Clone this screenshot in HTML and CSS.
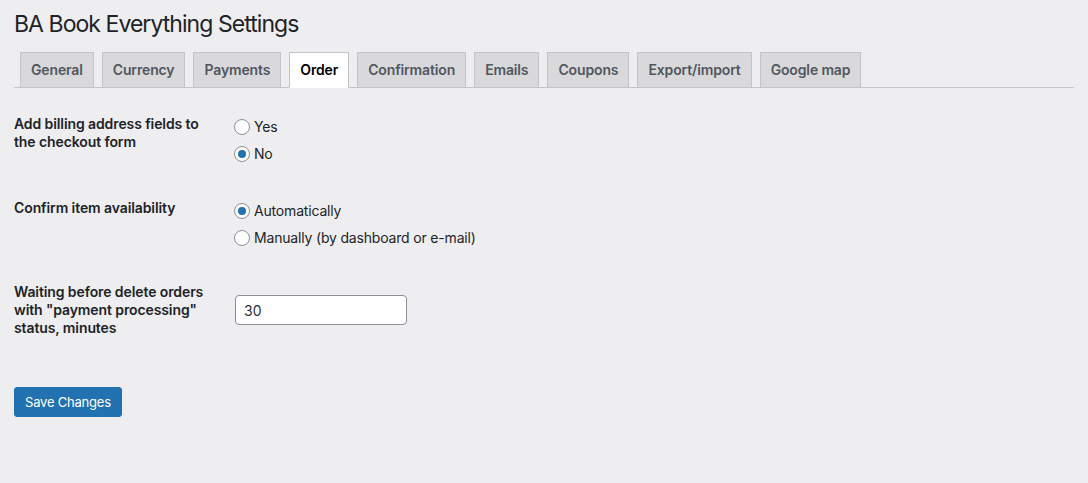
FILE: index.html
```html
<!DOCTYPE html>
<html lang="en">
<head>
<meta charset="utf-8">
<title>BA Book Everything Settings</title>
<link rel="stylesheet" href="styles.css">
</head>
<body>
<div class="wrap">
  <h1 class="title">BA Book Everything Settings</h1>
  <nav class="nav-tab-wrapper">
    <a class="nav-tab" href="#">General</a>
    <a class="nav-tab" href="#">Currency</a>
    <a class="nav-tab" href="#">Payments</a>
    <a class="nav-tab nav-tab-active" href="#">Order</a>
    <a class="nav-tab" href="#">Confirmation</a>
    <a class="nav-tab" href="#">Emails</a>
    <a class="nav-tab" href="#">Coupons</a>
    <a class="nav-tab" href="#">Export/import</a>
    <a class="nav-tab" href="#">Google map</a>
  </nav>
  <form class="settings-form">
    <div class="form-table">
      <div class="row">
        <div class="th">Add billing address fields to the checkout form</div>
        <div class="td">
          <label class="radio-option"><input type="radio" name="billing"><span>Yes</span></label>
          <label class="radio-option"><input type="radio" name="billing" checked><span>No</span></label>
        </div>
      </div>
      <div class="row">
        <div class="th">Confirm item availability</div>
        <div class="td">
          <label class="radio-option"><input type="radio" name="confirm" checked><span>Automatically</span></label>
          <label class="radio-option"><input type="radio" name="confirm"><span>Manually (by dashboard or e-mail)</span></label>
        </div>
      </div>
      <div class="row">
        <div class="th">Waiting before delete orders with "payment processing" status, minutes</div>
        <div class="td td-input">
          <input class="text-input" type="text" value="30">
        </div>
      </div>
    </div>
    <p class="submit"><button type="button" class="button-primary">Save Changes</button></p>
  </form>
</div>
</body>
</html>
```
FILE: styles.css
```css
html, body {
  margin: 0;
  padding: 0;
  background: #eeeef0;
  color: #1d2327;
  font-family: Inter, "Noto Sans", "Liberation Sans", sans-serif;
  font-size: 13px;
}
.wrap {
  padding: 0 14px;
}
.title {
  margin: 0;
  padding-top: 9px;
  font-size: 23px;
  font-weight: 400;
  line-height: 30px;
  letter-spacing: -0.95px;
  color: #1d2327;
}
.nav-tab-wrapper {
  margin-top: 13px;
  display: flex;
  border-bottom: 1px solid #c3c4c7;
  padding-left: 6px;
  gap: 8px;
}
.nav-tab {
  display: block;
  margin-bottom: -1px;
  padding: 5px 10px;
  border: 1px solid #c3c4c7;
  border-bottom: 1px solid #c3c4c7;
  background: #d9d9dc;
  color: #50575e;
  font-size: 14px;
  font-weight: 600;
  line-height: 24px;
  letter-spacing: -0.14px;
  text-decoration: none;
}
.nav-tab-active {
  background: #fff;
  color: #000;
  border-bottom-color: #fff;
}
.form-table {
  margin-top: 7px;
}
.row {
  display: grid;
  grid-template-columns: 210px 1fr;
}
.th {
  padding: 20px 10px 20px 0;
  font-size: 14px;
  font-weight: 600;
  line-height: 18px;
  letter-spacing: -0.1px;
  color: #1d2327;
}
.td {
  padding: 18px 10px 12px 10px;
  display: flex;
  flex-direction: column;
  align-items: flex-start;
}
.radio-option {
  display: flex;
  align-items: center;
  height: 27px;
  font-size: 14px;
  letter-spacing: -0.18px;
  color: #1d2327;
}
.radio-option input {
  appearance: none;
  -webkit-appearance: none;
  width: 16px;
  height: 16px;
  margin: 0 4px 0 0;
  border: 1px solid #8c8f94;
  border-radius: 50%;
  background: #fff;
  display: grid;
  place-items: center;
  box-sizing: border-box;
}
.radio-option input:checked::before {
  content: "";
  width: 8px;
  height: 8px;
  border-radius: 50%;
  background: #2271b1;
}
.td-input {
  padding-top: 32px;
}
.text-input {
  width: 172px;
  height: 30px;
  box-sizing: border-box;
  margin-left: 1px;
  padding: 0 8px;
  border: 1px solid #8c8f94;
  border-radius: 4px;
  background: #fff;
  font-family: inherit;
  font-size: 14px;
  color: #2c3338;
}
.submit {
  margin: 0;
  padding: 30px 0 0;
}
.button-primary {
  height: 30px;
  padding: 0 10px;
  border: 1px solid #2271b1;
  border-radius: 3px;
  background: #2271b1;
  color: #fff;
  font-family: inherit;
  font-size: 13px;
  line-height: 28px;
  letter-spacing: -0.2px;
}
```
